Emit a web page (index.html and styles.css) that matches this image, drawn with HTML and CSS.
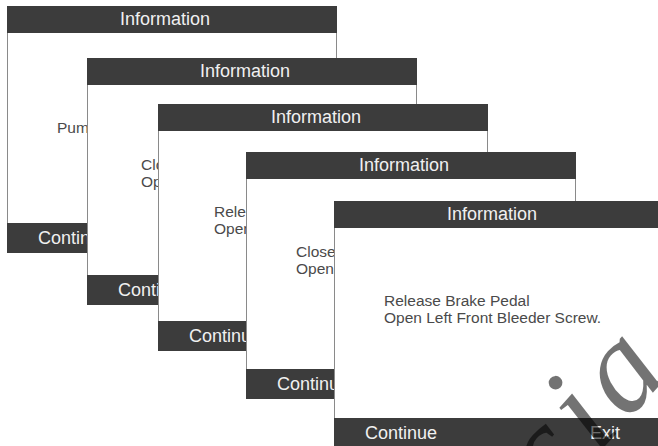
FILE: index.html
```html
<!DOCTYPE html>
<html lang="en">
<head>
    <meta charset="UTF-8">
    <meta name="viewport" content="width=device-width, initial-scale=1.0">
    <title>Brake Bleed Steps</title>
    <link rel="stylesheet" href="styles.css">
</head>
<body>
    <div class="stack">
        <div class="screen screen-1">
            <div class="screen-header">Information</div>
            <div class="screen-body">
                <p>Pump Brake Pedal Slowly 5 Times.</p>
            </div>
            <div class="screen-footer"><span>Continue</span><span>Exit</span></div>
        </div>

        <div class="screen screen-2">
            <div class="screen-header">Information</div>
            <div class="screen-body">
                <p>Close Right Rear Bleeder Screw.<br>Open Left Rear Bleeder Screw.</p>
            </div>
            <div class="screen-footer"><span>Continue</span><span>Exit</span></div>
        </div>

        <div class="screen screen-3">
            <div class="screen-header">Information</div>
            <div class="screen-body">
                <p>Release Brake Pedal<br>Open Left Rear Bleeder Screw.</p>
            </div>
            <div class="screen-footer"><span>Continue</span><span>Exit</span></div>
        </div>

        <div class="screen screen-4">
            <div class="screen-header">Information</div>
            <div class="screen-body">
                <p>Close Left Rear Bleeder Screw.<br>Open Right Front Bleeder Screw.</p>
            </div>
            <div class="screen-footer"><span>Continue</span><span>Exit</span></div>
        </div>

        <div class="screen screen-5">
            <div class="screen-header">Information</div>
            <div class="screen-body">
                <p>Release Brake Pedal<br>Open Left Front Bleeder Screw.</p>
            </div>
            <div class="screen-footer"><span>Continue</span><span>Exit</span></div>
        </div>

        <div class="watermark">sia</div>
    </div>
</body>
</html>
```

FILE: styles.css
```css
* {
    box-sizing: border-box;
}

body {
    margin: 0;
    background-color: #fff;
    font-family: 'Liberation Sans', Arial, sans-serif;
    overflow: hidden;
}

.stack {
    position: relative;
    width: 658px;
    height: 446px;
    overflow: hidden;
}

/* each screen is a window cascaded over the previous one */
.screen {
    position: absolute;
    width: 330px;
    height: 247px;
    display: flex;
    flex-direction: column;
    background: #fff;
    border: 1px solid #8a8a8a;
}

.screen-1 { left: 7px;   top: 6px; }
.screen-2 { left: 87px;  top: 58px; }
.screen-3 { left: 158px; top: 104px; }
.screen-4 { left: 246px; top: 152px; }
.screen-5 { left: 334px; top: 201px; }

.screen-header {
    height: 27px;
    margin: -1px -1px 0 -1px;
    background-color: #3c3c3c;
    color: #f0f0f0;
    font-size: 18px;
    line-height: 27px;
    text-align: center;
    padding-right: 14px;
}

.screen-body {
    flex: 1;
    padding-left: 49px;
}

.screen-body p {
    margin: 0;
    color: #4a4a4a;
    font-size: 15.5px;
    line-height: 17px;
    white-space: nowrap;
}

.screen-1 .screen-body { padding-top: 86px; }
.screen-2 .screen-body { padding-top: 71px; padding-left: 53px; }
.screen-3 .screen-body { padding-top: 72px; padding-left: 55px; }
.screen-4 .screen-body { padding-top: 64px; }
.screen-5 .screen-body { padding-top: 64px; }

.screen-footer {
    height: 30px;
    margin: 0 -1px -1px -1px;
    display: flex;
    justify-content: space-between;
    align-items: center;
    padding: 0 44px 0 31px;
    background-color: #3c3c3c;
    color: #f0f0f0;
    font-size: 18px;
}

.watermark {
    position: absolute;
    left: 574px;
    top: 382px;
    font-family: 'Liberation Serif', serif;
    font-style: italic;
    font-size: 130px;
    line-height: 1;
    letter-spacing: 8px;
    color: rgba(0, 0, 0, 0.55);
    transform: rotate(-48deg);
    transform-origin: left bottom;
}
```
